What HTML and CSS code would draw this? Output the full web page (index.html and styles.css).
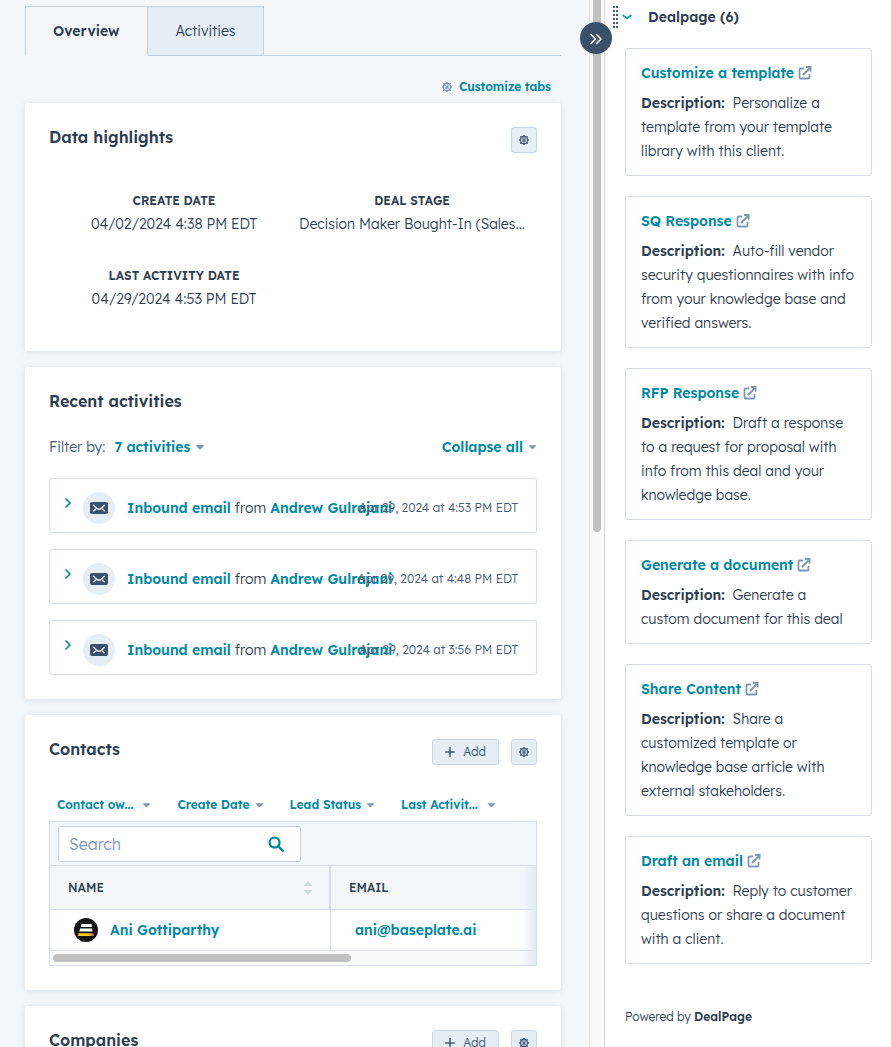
FILE: index.html
```html
<!DOCTYPE html>
<html lang="en">
<head>
<meta charset="utf-8">
<meta name="viewport" content="width=device-width, initial-scale=1">
<title>Deal record</title>
<link rel="stylesheet" href="styles.css">
</head>
<body>
<svg class="sprite" aria-hidden="true">
  <symbol id="gear" viewBox="0 0 12 12">
    <g fill="none" stroke="currentColor">
      <circle cx="6" cy="6" r="3.500" stroke-width="1.300"/>
      <circle cx="6" cy="6" r="1" stroke-width="1.200"/>
      <path stroke-width="1.600" stroke-linecap="round" d="M6 1.500v.5M6 10v.5M1.500 6H2M10 6h.5M2.800 2.800l.4.4M8.800 8.800l.4.4M2.800 9.200l.4-.4M8.800 3.200l.4-.4"/>
      <path stroke-width=".6" d="M3.500 3.500l5 5M8.500 3.500l-5 5M6 2.500v2.300M6 7.200v2.300"/>
    </g>
  </symbol>
  <symbol id="external" viewBox="0 0 14 14">
    <path fill="none" stroke="currentColor" stroke-width="1.800" stroke-linejoin="round" d="M6 2.500H2.500a1 1 0 0 0-1 1v8a1 1 0 0 0 1 1h8a1 1 0 0 0 1-1V8M5 9l7-7"/>
    <path fill="currentColor" d="M8 0h5.500v5.500h-1.800V1.900H8z"/>
  </symbol>
  <symbol id="caret" viewBox="0 0 10 6">
    <path fill="currentColor" d="M1.200 1h7.600q.9 0 .3.700L5.600 5.200q-.6.500-1.200 0L.9 1.700Q.3 1 1.200 1z"/>
  </symbol>
  <symbol id="chevron" viewBox="0 0 6 10">
    <path fill="none" stroke="currentColor" stroke-width="1.700" stroke-linecap="round" stroke-linejoin="round" d="M1 1l4 4-4 4"/>
  </symbol>
  <symbol id="mail" viewBox="0 0 18 12">
    <rect width="18" height="12" rx="2" fill="#3b506b"/>
    <path fill="none" stroke="#e5edf5" stroke-width="1.400" stroke-linecap="round" stroke-linejoin="round" d="M3.500 3.200L7 6.400q2 1.700 4 0l3.500-3.200M3.500 8.800l2.200-1.700M14.500 8.800l-2.200-1.700"/>
  </symbol>
  <symbol id="plus" viewBox="0 0 10 10">
    <path fill="none" stroke="currentColor" stroke-width="1.500" stroke-linecap="round" d="M5 .7v8.600M.7 5h8.600"/>
  </symbol>
</svg>
<div class="app">
  <main class="main">
    <nav class="tabs" aria-label="Record">
      <button class="tab tab-active" type="button">Overview</button>
      <button class="tab" type="button">Activities</button>
    </nav>
    <div class="customize">
      <svg class="icon-gear"><use href="#gear"/></svg>
      <a href="#" class="link small">Customize tabs</a>
    </div>

    <section class="card">
      <header class="card-head">
        <h2>Data highlights</h2>
        <button class="btn btn-icon" type="button" aria-label="Settings"><svg class="icon-gear"><use href="#gear"/></svg></button>
      </header>
      <dl class="highlights">
        <div><dt>CREATE DATE</dt><dd>04/02/2024 4:38 PM EDT</dd></div>
        <div><dt>DEAL STAGE</dt><dd>Decision Maker Bought-In (Sales...</dd></div>
        <div><dt>LAST ACTIVITY DATE</dt><dd>04/29/2024 4:53 PM EDT</dd></div>
      </dl>
    </section>

    <section class="card">
      <header class="card-head"><h2>Recent activities</h2></header>
      <div class="filter-row">
        <span class="filter-label">Filter by:</span>
        <button class="link-btn" type="button">7 activities <svg class="caret"><use href="#caret"/></svg></button>
        <button class="link-btn push" type="button">Collapse all <svg class="caret caret-sm"><use href="#caret"/></svg></button>
      </div>
      <div class="activities">
        <article class="activity">
          <button class="expand" type="button" aria-label="Expand"><svg><use href="#chevron"/></svg></button>
          <span class="bubble"><svg><use href="#mail"/></svg></span>
          <p><a href="#" class="link">Inbound email</a> from <a href="#" class="link">Andrew Gulrajani</a></p>
          <time>Apr 29, 2024 at 4:53 PM EDT</time>
        </article>
        <article class="activity">
          <button class="expand" type="button" aria-label="Expand"><svg><use href="#chevron"/></svg></button>
          <span class="bubble"><svg><use href="#mail"/></svg></span>
          <p><a href="#" class="link">Inbound email</a> from <a href="#" class="link">Andrew Gulrajani</a></p>
          <time>Apr 29, 2024 at 4:48 PM EDT</time>
        </article>
        <article class="activity">
          <button class="expand" type="button" aria-label="Expand"><svg><use href="#chevron"/></svg></button>
          <span class="bubble"><svg><use href="#mail"/></svg></span>
          <p><a href="#" class="link">Inbound email</a> from <a href="#" class="link">Andrew Gulrajani</a></p>
          <time>Apr 29, 2024 at 3:56 PM EDT</time>
        </article>
      </div>
    </section>

    <section class="card">
      <header class="card-head">
        <h2>Contacts</h2>
        <div class="actions">
          <button class="btn btn-add" type="button"><svg class="plus"><use href="#plus"/></svg>Add</button>
          <button class="btn btn-icon" type="button" aria-label="Settings"><svg class="icon-gear"><use href="#gear"/></svg></button>
        </div>
      </header>
      <div class="column-filters">
        <button class="link-btn small clipped" type="button">Contact ow... <svg class="caret caret-sm"><use href="#caret"/></svg></button>
        <button class="link-btn small" type="button">Create Date <svg class="caret caret-sm"><use href="#caret"/></svg></button>
        <button class="link-btn small" type="button">Lead Status <svg class="caret caret-sm"><use href="#caret"/></svg></button>
        <button class="link-btn small clipped" type="button">Last Activit... <svg class="caret caret-sm"><use href="#caret"/></svg></button>
      </div>
      <div class="table-box">
        <div class="toolbar">
          <label class="search">
            <input type="search" placeholder="Search" aria-label="Search contacts">
            <svg viewBox="0 0 18 18"><circle cx="7" cy="7" r="5.200" fill="none" stroke="currentColor" stroke-width="2.400"/><path d="M11 11l5.500 5.500" stroke="currentColor" stroke-width="2.400"/></svg>
          </label>
        </div>
        <div class="table-scroll">
          <table>
            <thead>
              <tr>
                <th class="col-name"><div class="th-inner">NAME
                  <svg class="sort" viewBox="0 0 8 14"><path d="M4 0l4 5H0zM4 14l4-5H0z" fill="#cbd6e2"/></svg></div></th>
                <th>EMAIL</th>
              </tr>
            </thead>
            <tbody>
              <tr>
                <td><div class="person">
                  <svg class="avatar" viewBox="0 0 24 24">
                    <defs><linearGradient id="base"><stop offset=".65" stop-color="#f9cf17"/><stop offset="1" stop-color="#a64b9c"/></linearGradient></defs>
                    <circle cx="12" cy="12" r="12" fill="#141414"/>
                    <path d="M7.500 6h10l.5 3H7z" fill="#fff"/>
                    <path d="M6 10.500h12l.5 3H5.500z" fill="#fff"/>
                    <path d="M4.500 15.200h15l.5 2.800H4z" fill="url(#base)"/>
                  </svg>
                  <a href="#" class="link">Ani Gottiparthy</a></div></td>
                <td class="email"><a href="#" class="link">ani@baseplate.ai</a></td>
              </tr>
            </tbody>
          </table>
          <div class="hscroll"><div class="hthumb"></div></div>
        </div>
      </div>
    </section>

    <section class="card">
      <header class="card-head">
        <h2>Companies</h2>
        <div class="actions">
          <button class="btn btn-add" type="button"><svg class="plus"><use href="#plus"/></svg>Add</button>
          <button class="btn btn-icon" type="button" aria-label="Settings"><svg class="icon-gear"><use href="#gear"/></svg></button>
        </div>
      </header>
    </section>
  </main>

  <div class="vscroll">
    <div class="vthumb"></div>
    <button class="collapse" type="button" aria-label="Collapse sidebar">
      <svg viewBox="0 0 12 12"><path d="M1 1.500L5.500 6 1 10.500M6.500 1.500L11 6l-4.500 4.500" fill="none" stroke="#fff" stroke-width="1.600" stroke-linecap="round" stroke-linejoin="round"/></svg>
    </button>
  </div>

  <aside class="side">
    <header class="side-head">
      <svg class="grip" viewBox="0 0 5 22"><path d="M1 0v22M4 0v22" stroke="#425b76" stroke-width="2" stroke-dasharray="2 2"/></svg>
      <svg class="down" viewBox="0 0 10 6"><path d="M1.200 1.500L5 4.200l3.800-2.700" fill="none" stroke="#00a4bd" stroke-width="1.800" stroke-linecap="round" stroke-linejoin="round"/></svg>
      <h3>Dealpage (6)</h3>
    </header>
    <div class="side-list">
      <article class="deal">
        <a href="#" class="link">Customize a template <svg class="ext"><use href="#external"/></svg></a>
        <p><b>Description:</b> Personalize a template from your template library with this client.</p>
      </article>
      <article class="deal">
        <a href="#" class="link">SQ Response <svg class="ext"><use href="#external"/></svg></a>
        <p><b>Description:</b> Auto-fill vendor security questionnaires with info from your knowledge base and verified answers.</p>
      </article>
      <article class="deal">
        <a href="#" class="link">RFP Response <svg class="ext"><use href="#external"/></svg></a>
        <p><b>Description:</b> Draft a response to a request for proposal with info from this deal and your knowledge base.</p>
      </article>
      <article class="deal">
        <a href="#" class="link">Generate a document <svg class="ext"><use href="#external"/></svg></a>
        <p><b>Description:</b> Generate a custom document for this deal</p>
      </article>
      <article class="deal">
        <a href="#" class="link">Share Content <svg class="ext"><use href="#external"/></svg></a>
        <p><b>Description:</b> Share a customized template or knowledge base article with external stakeholders.</p>
      </article>
      <article class="deal">
        <a href="#" class="link">Draft an email <svg class="ext"><use href="#external"/></svg></a>
        <p><b>Description:</b> Reply to customer questions or share a document with a client.</p>
      </article>
    </div>
    <footer class="powered">Powered by <b>DealPage</b></footer>
  </aside>
</div>
</body>
</html>
```

FILE: styles.css
```css
* { box-sizing: border-box; }
body {
  margin: 0;
  font: 300 14px/24px "Lexend Deca", Lexend, Inter, sans-serif;
  color: #2d3e50;
  background: #fff;
}
h2, h3, p, dl, dd { margin: 0; }
button, input { font: inherit; color: inherit; margin: 0; }
button { cursor: pointer; }
svg { flex: none; display: block; }
.sprite { position: absolute; width: 0; height: 0; }

.app { display: flex; height: 100vh; overflow: hidden; }
.main {
  flex: 1;
  min-width: 0;
  padding: 6px 28px 0 25px;
  background: #f3f7fa;
  overflow: hidden;
}

.link, .link-btn {
  color: #0089a5;
  font-weight: 600;
  text-decoration: none;
}
.link-btn {
  display: inline-flex;
  align-items: center;
  gap: 5px;
  padding: 0;
  border: 0;
  background: none;
}
.small { font-size: 12px; }

.tabs { display: flex; border-bottom: 1px solid #c3d1df; }
.tab {
  height: 50px;
  margin-bottom: -1px;
  padding: 0 28px;
  border: 1px solid #c3d1df;
  border-left: 0;
  background: #e5edf5;
}
.tab-active {
  padding: 0 27px;
  border-left: 1px solid #c3d1df;
  border-bottom-color: #f3f7fa;
  background: #f3f7fa;
  font-weight: 600;
}

.customize {
  display: flex;
  align-items: center;
  justify-content: flex-end;
  gap: 6px;
  padding: 19px 10px 4px;
  color: #7c98b6;
}
.icon-gear { width: 12px; height: 12px; }

.card {
  margin-bottom: 16px;
  padding: 24px;
  border-radius: 3px;
  background: #fff;
  box-shadow: 0 1px 6px rgba(45, 62, 80, .12);
}
.card-head { display: flex; justify-content: space-between; align-items: flex-start; }
.card-head h2 { font-size: 16px; line-height: 20px; font-weight: 600; }
.actions { display: flex; gap: 12px; }
.btn {
  display: flex;
  align-items: center;
  justify-content: center;
  gap: 8px;
  height: 26px;
  padding: 0;
  border: 1px solid #cbd6e2;
  border-radius: 3px;
  background: #e5edf5;
  color: #425b76;
  font-size: 12px;
}
.btn-icon { width: 26px; }
.btn-add { padding: 0 12px; }
.plus { width: 10px; height: 10px; }

.highlights {
  display: grid;
  grid-template-columns: repeat(2, minmax(0, 1fr));
  row-gap: 28px;
  padding: 36px 6px 16px;
  text-align: center;
}
.highlights dt { font-size: 12px; font-weight: 600; }
.highlights dd { line-height: 23px; white-space: nowrap; }

.filter-row { display: flex; gap: 9px; margin-top: 24px; margin-bottom: 19px; }
.filter-label { color: #425b76; }
.push { margin-left: auto; }
.caret { width: 10px; height: 6px; color: #7c98b6; }
.caret-sm { width: 9px; height: 6px; }

.activities { display: grid; gap: 16px; }
.activity {
  position: relative;
  display: flex;
  align-items: center;
  height: 55px;
  padding: 4px 16px 0 15px;
  border: 1px solid #d6dbe8;
  border-radius: 3px;
  white-space: nowrap;
}
.expand {
  padding: 0;
  margin: 0 12px 10px 0;
  border: 0;
  background: none;
  color: #0089a5;
}
.expand svg { width: 6px; height: 10px; }
.bubble {
  display: flex;
  align-items: center;
  justify-content: center;
  width: 32px;
  height: 32px;
  margin-right: 12px;
  border-radius: 50%;
  background: #e5edf5;
}
.bubble svg { width: 18px; height: 12px; }
.activity time {
  position: absolute;
  right: 18px;
  font-size: 12px;
  color: #425b76;
}

.column-filters { display: flex; gap: 26px; padding: 28px 9px 4px 8px; white-space: nowrap; }
.column-filters .clipped { gap: 9px; }
.table-box { border: 1px solid #d6dde8; }
.toolbar { padding: 4px 8px 3px; background: #f3f7fa; border-bottom: 1px solid #d6dde8; }
.search {
  display: flex;
  align-items: center;
  width: 243px;
  max-width: 100%;
  height: 36px;
  padding: 0 15px 0 10px;
  border: 1px solid #c3d1df;
  border-radius: 3px;
  background: #fff;
  color: #0089a5;
}
.search input {
  flex: 1;
  min-width: 0;
  padding: 0;
  border: 0;
  outline: 0;
  background: none;
  font-size: 16px;
  color: #33475b;
}
.search input::placeholder { color: #7c98b6; opacity: 1; }
.search svg { width: 17px; height: 17px; }

.table-scroll { position: relative; }
.table-scroll::after {
  content: "";
  position: absolute;
  inset: 0 0 0 auto;
  width: 14px;
  background: linear-gradient(to right, rgba(229, 237, 245, 0), #e1e9f2);
}
table { width: 100%; border-collapse: separate; border-spacing: 0; table-layout: fixed; }
th {
  height: 44px;
  padding: 1px 17px 0 18px;
  border-bottom: 1px solid #d6dde8;
  background: #f3f7fa;
  font-size: 12px;
  font-weight: 500;
  text-align: left;
}
.col-name { width: 281px; border-right: 2px solid #d6dde8; }
.th-inner { display: flex; align-items: center; justify-content: space-between; }
.sort { width: 8px; height: 14px; }
td { height: 41px; padding: 0 24px; border-bottom: 1px solid #d6dde8; }
td:first-child { border-right: 1px solid #d6dde8; }
.person { display: flex; align-items: center; gap: 12px; }
.avatar { width: 24px; height: 24px; }
.hscroll { padding: 3px; background: #fafafa; }
.hthumb { width: 62%; height: 8px; border-radius: 4px; background: #c1c1c1; }

.vscroll {
  position: relative;
  width: 16px;
  padding: 0 3px;
  border-left: 1px solid #e2e5e9;
  border-right: 1px solid #d3d8e4;
  background: #fafafa;
}
.vthumb { width: 8px; height: 50.8%; border-radius: 0 0 4px 4px; background: #c1c1c1; }
.collapse {
  position: absolute;
  top: 22px;
  left: -10px;
  display: flex;
  align-items: center;
  justify-content: center;
  width: 32px;
  height: 32px;
  padding: 2px 0 0;
  border: 0;
  border-radius: 50%;
  background: #3b506b;
}
.collapse svg { width: 12px; height: 12px; }

.side { width: 286px; flex: none; padding: 5px 19px 0 8px; }
.side-head { display: flex; align-items: center; gap: 4px; }
.grip { width: 5px; height: 22px; }
.down { width: 10px; height: 6px; }
.side-head h3 { margin-left: 12px; font-size: 14px; font-weight: 600; }
.side-list { display: grid; gap: 20px; padding: 19px 0 0 12px; }
.deal { padding: 12px 15px; border: 1px solid #d9dde8; border-radius: 3px; }
.deal .link { display: flex; align-items: center; gap: 4px; }
.ext { width: 14px; height: 14px; color: #7c98b6; }
.deal p { margin-top: 6px; }
.deal b, .powered b { font-weight: 600; }
.deal b { margin-right: 4px; }
.powered { padding: 41px 0 0 12px; font-size: 12px; }
```
